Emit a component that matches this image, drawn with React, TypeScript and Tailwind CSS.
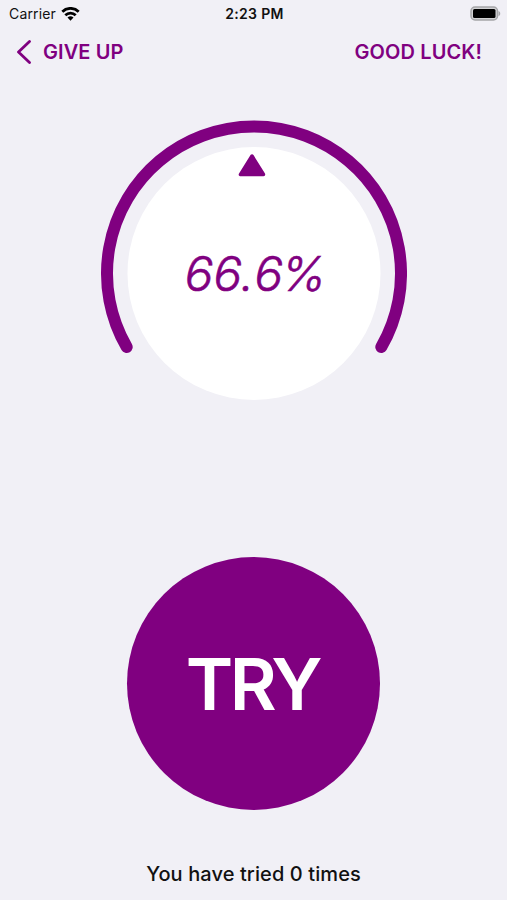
const ACCENT = '#800080';

function StatusBar() {
  return (
    <div className="grid h-7 grid-cols-3 items-center pl-[9px] pr-[6px] text-[14px] leading-none text-[#111]">
      <div className="flex items-center gap-[5px]">
        <span className="tracking-[0.15px]">Carrier</span>
        <svg width="19" height="14" viewBox="0 0 19 14" fill="none" stroke="black" strokeWidth="2.700" aria-hidden>
          <path d="M1.300 4.700a11.600 11.600 0 0 1 16.400 0" />
          <path d="M4.300 8.200a7.350 7.350 0 0 1 10.400 0" />
          <path d="m9.500 13.700-3-3.100a4.300 4.300 0 0 1 6 0Z" fill="black" stroke="none" />
        </svg>
      </div>
      <span className="pr-px text-center font-semibold tracking-[0.3px]">2:23 PM</span>
      <svg className="justify-self-end" width="31" height="16" viewBox="0 0 31 16" aria-hidden>
        <rect x="1" y="1" width="26.500" height="13" rx="4" fill="#d2d2d4" stroke="#a5a5a8" strokeWidth="1.500" />
        <rect x="3" y="3" width="22.500" height="9" rx="1.500" fill="black" />
        <path d="M28.500 5c2.300 1 2.300 4.200 0 5.200Z" fill="#a5a5a8" />
      </svg>
    </div>
  );
}

export default function App() {
  return (
    <div className="flex h-[900px] w-[507px] flex-col overflow-hidden bg-[#f1f0f6] font-['Inter',sans-serif] text-[#800080]">
      <StatusBar />

      <nav className="flex h-12 items-center justify-between pl-4 pr-[25px] text-[20px] font-semibold">
        <button className="flex items-center gap-3">
          <svg width="15" height="24" viewBox="0 0 15 24" fill="none" stroke={ACCENT} strokeWidth="2.800" strokeLinecap="round" strokeLinejoin="round" aria-hidden>
            <path d="M13.500 1.500 2.500 12l11 10.500" />
          </svg>
          <span className="tracking-[0.1px]">GIVE UP</span>
        </button>
        <button className="tracking-[0.1px]">GOOD LUCK!</button>
      </nav>

      <main className="flex flex-1 flex-col items-center">
        {/* Dial */}
        <div className="relative mt-[44px] h-[307px] w-[307px]">
          <svg width="307" height="307" viewBox="-1 -1 307 307" aria-hidden>
            <circle cx="153" cy="152.500" r="126.500" fill="white" />
            <path d="M25.700 226a147 147 0 1 1 254.600 0" fill="none" stroke={ACCENT} strokeWidth="12" strokeLinecap="round" />
            <path d="M151 35 139.500 53.500h23Z" fill={ACCENT} stroke={ACCENT} strokeWidth="3.500" strokeLinejoin="round" />
          </svg>
          <div className="absolute inset-0 flex items-center justify-center pl-[2px] pt-px text-[48px] font-light italic [-webkit-text-stroke:0.6px_#800080]">
            <span className="tracking-[0.1px]">66.</span>
            <span className="tracking-[-1.7px]">6%</span>
          </div>
        </div>

        <button className="mt-[130px] h-[253px] w-[253px] rounded-full bg-[#800080] pr-[2px] pt-px text-[72px] font-semibold tracking-[-3.5px] text-white">
          TRY
        </button>
        <p className="mt-[49px] text-[20px] font-medium tracking-[0.1px] text-[#111]">You have tried 0 times</p>
      </main>
    </div>
  );
}
